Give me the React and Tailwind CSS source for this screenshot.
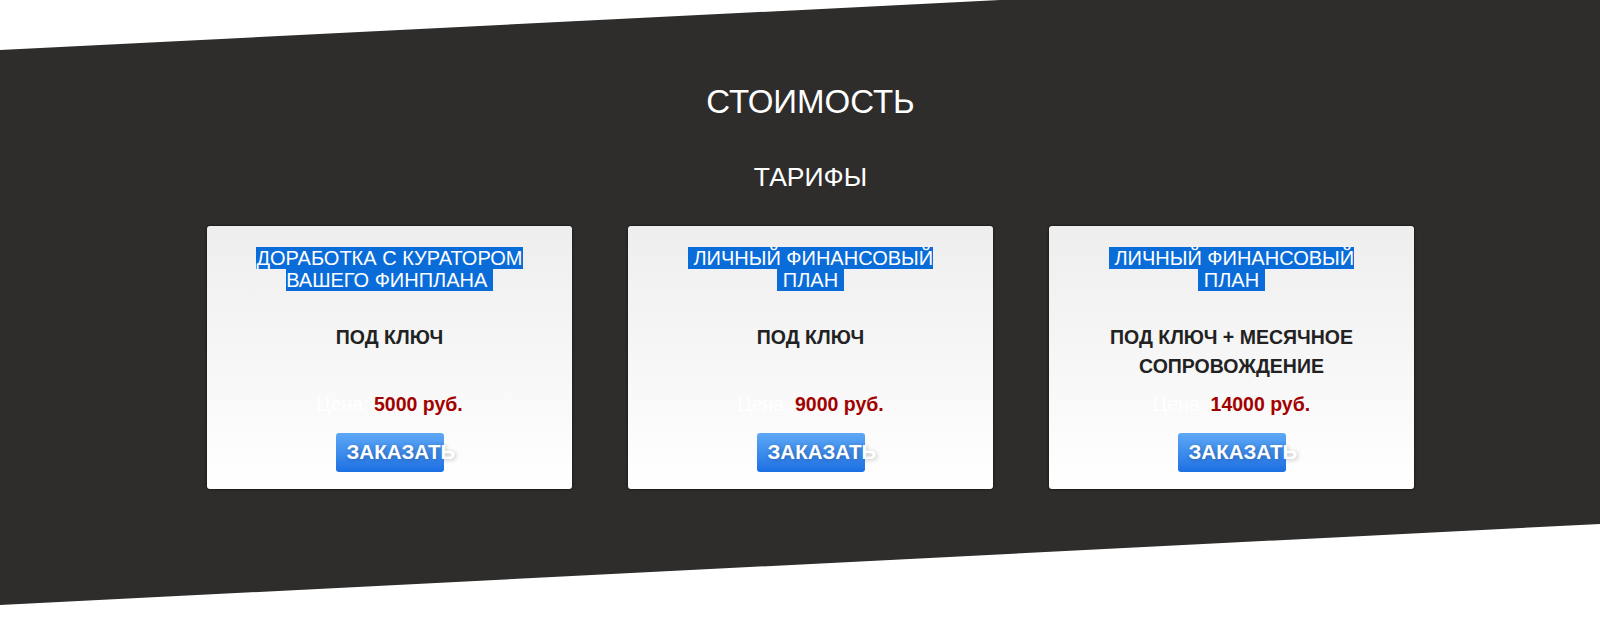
const plans = [
  {
    title: ['ДОРАБОТКА С КУРАТОРОМ', 'ВАШЕГО ФИНПЛАНА\u00a0'],
    sub: ['ПОД КЛЮЧ'],
    price: '5000 руб.',
  },
  {
    title: ['\u00a0ЛИЧНЫЙ ФИНАНСОВЫЙ', '\u00a0ПЛАН\u00a0'],
    sub: ['ПОД КЛЮЧ'],
    price: '9000 руб.',
  },
  {
    title: ['\u00a0ЛИЧНЫЙ ФИНАНСОВЫЙ', '\u00a0ПЛАН\u00a0'],
    sub: ['ПОД КЛЮЧ + МЕСЯЧНОЕ', 'СОПРОВОЖДЕНИЕ'],
    price: '14000 руб.',
  },
];

function PlanCard({ plan }) {
  return (
    <div className="w-[365px] h-[263px] rounded-[3px] bg-gradient-to-b from-[#eeeeee] to-white shadow-[0_0_3px_rgba(0,0,0,0.7)] flex flex-col items-center pt-[21px] text-center">
      {/* заголовок тарифа (выделенный текст) */}
      <div className="text-[20px] leading-[22px] text-white">
        {plan.title.map(line => (
          <div key={line}>
            <span className="bg-[#0a6cd8] whitespace-pre">{line}</span>
          </div>
        ))}
      </div>
      <div className="mt-[32px] h-[57px] text-[19.5px] leading-[28.5px] font-bold text-[#222]">
        {plan.sub.map(line => (
          <div key={line}>{line}</div>
        ))}
      </div>
      <div className="mt-[13px] text-[19.5px] leading-[23px] font-bold">
        <span className="text-white font-normal">Цена: </span>
        <span className="text-[#a30000]">{plan.price}</span>
      </div>
      <button className="mt-[17px] w-[108px] h-[39px] pl-[11px] text-left whitespace-nowrap overflow-visible rounded-[3px] bg-gradient-to-b from-[#5ea8f6] to-[#1b6fe3] text-white text-[20.5px] font-bold [text-shadow:1px_1px_4px_rgba(0,0,0,0.25)]">
        ЗАКАЗАТЬ
      </button>
    </div>
  );
}

export default function App() {
  return (
    <div className="w-[1600px] h-[617px] bg-white overflow-hidden font-['Liberation_Sans',Arial,sans-serif]">
      <section className="h-[617px] bg-[#2e2d2b] [clip-path:polygon(0_50px,100%_-30px,100%_524px,0_605px)] flex flex-col items-center pt-[82px] pl-[21px]">
        <h2 className="text-[33px] leading-[40px] text-white">СТОИМОСТЬ</h2>
        <h3 className="mt-[40px] text-[26.5px] leading-[31px] text-white">ТАРИФЫ</h3>
        <div className="mt-[33px] flex gap-[56px]">
          {plans.map((plan, i) => (
            <PlanCard key={i} plan={plan} />
          ))}
        </div>
      </section>
    </div>
  );
}
